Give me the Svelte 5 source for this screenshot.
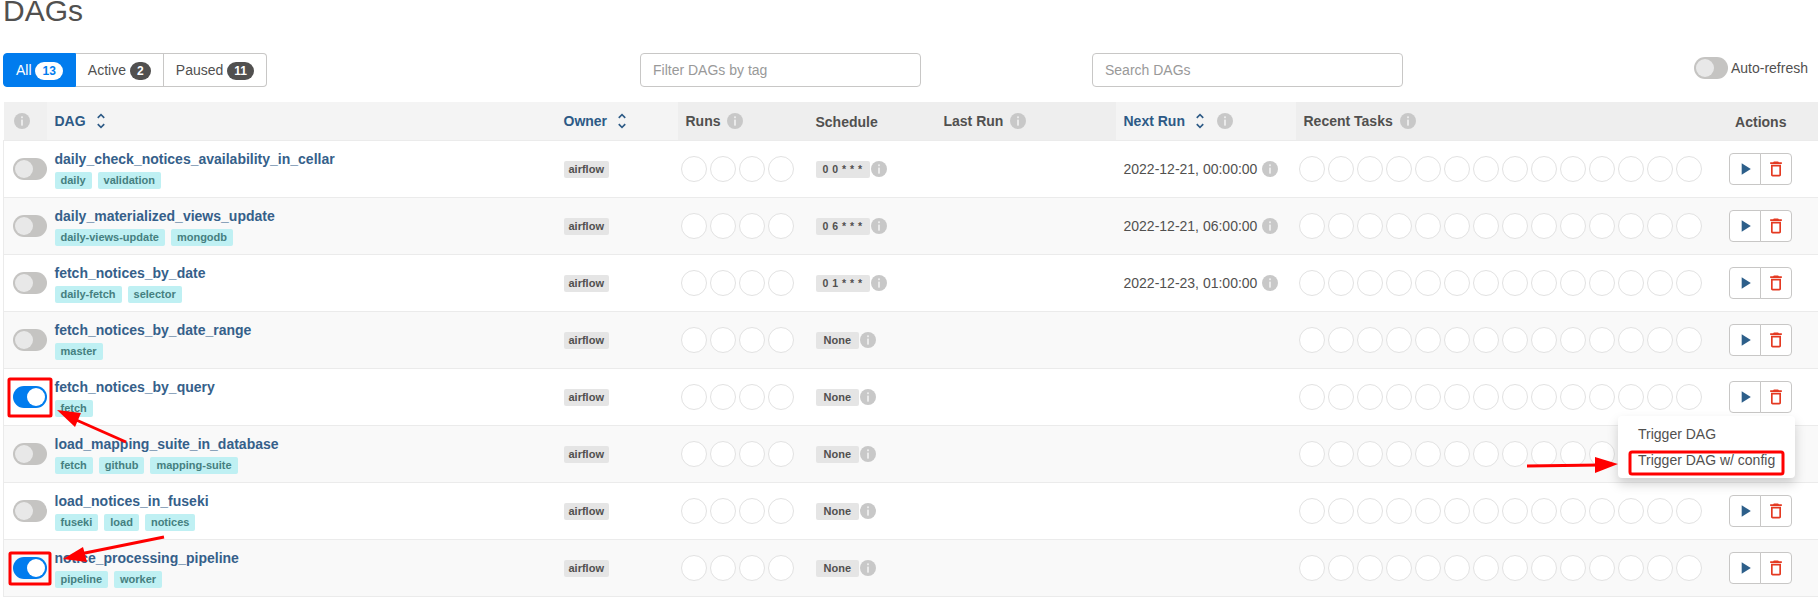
<script>
  const dags = [
    { name: 'daily_check_notices_availability_in_cellar', tags: ['daily', 'validation'], schedule: '0 0 * * *', next: '2022-12-21, 00:00:00' },
    { name: 'daily_materialized_views_update', tags: ['daily-views-update', 'mongodb'], schedule: '0 6 * * *', next: '2022-12-21, 06:00:00' },
    { name: 'fetch_notices_by_date', tags: ['daily-fetch', 'selector'], schedule: '0 1 * * *', next: '2022-12-23, 01:00:00' },
    { name: 'fetch_notices_by_date_range', tags: ['master'], schedule: 'None' },
    { name: 'fetch_notices_by_query', tags: ['fetch'], schedule: 'None', on: true },
    { name: 'load_mapping_suite_in_database', tags: ['fetch', 'github', 'mapping-suite'], schedule: 'None' },
    { name: 'load_notices_in_fuseki', tags: ['fuseki', 'load', 'notices'], schedule: 'None' },
    { name: 'notice_processing_pipeline', tags: ['pipeline', 'worker'], schedule: 'None', on: true }
  ];
  const runs = Array(4);
  const tasks = Array(14);
</script>

{#snippet info()}
  <svg class="info" viewBox="0 0 16 16" aria-hidden="true">
    <circle cx="8" cy="8" r="8" />
    <rect x="7.1" y="3.4" width="1.8" height="1.8" fill="#eee" />
    <rect x="7.1" y="6.6" width="1.8" height="6" fill="#eee" />
  </svg>
{/snippet}

{#snippet sort()}
  <svg class="sort" viewBox="0 0 24 24" aria-hidden="true">
    <path d="M12 5.83L15.17 9l1.41-1.41L12 3 7.41 7.59 8.83 9 12 5.83zm0 12.34L8.83 15l-1.41 1.41L12 21l4.59-4.59L15.17 15 12 18.17z" />
  </svg>
{/snippet}

{#snippet circles(list)}
  <div class="circles">
    {#each list as _}
      <span class="circle"></span>
    {/each}
  </div>
{/snippet}

<main>
  <h2>DAGs</h2>

  <div class="toolbar">
    <div class="filters">
      <button class="active">All <span class="count">13</span></button>
      <button>Active <span class="count">2</span></button>
      <button>Paused <span class="count">11</span></button>
    </div>
    <input class="field" placeholder="Filter DAGs by tag" />
    <input class="field" placeholder="Search DAGs" />
    <div class="refresh">
      <span class="switch"></span>
      <span>Auto-refresh</span>
    </div>
  </div>

  <table>
    <colgroup>
      <col style="width: 43px" />
      <col style="width: 509px" />
      <col style="width: 122px" />
      <col style="width: 130px" />
      <col style="width: 128px" />
      <col style="width: 180px" />
      <col style="width: 180px" />
      <col style="width: 426px" />
      <col />
    </colgroup>
    <thead>
      <tr>
        <th class="first">{@render info()}</th>
        <th class="light link">DAG {@render sort()}</th>
        <th class="light link">Owner {@render sort()}</th>
        <th>Runs {@render info()}</th>
        <th class="low">Schedule</th>
        <th>Last Run {@render info()}</th>
        <th class="light link">Next Run {@render sort()} {@render info()}</th>
        <th>Recent Tasks {@render info()}</th>
        <th class="center low">Actions</th>
      </tr>
    </thead>
    <tbody>
      {#each dags as dag}
        <tr>
          <td class="toggle"><span class="switch" class:on={dag.on}></span></td>
          <td>
            <div class="name">{dag.name}</div>
            <div class="tags">
              {#each dag.tags as tag}
                <span class="tag">{tag}</span>
              {/each}
            </div>
          </td>
          <td><span class="badge owner">airflow</span></td>
          <td class="tight">{@render circles(runs)}</td>
          <td><span class="badge" class:cron={dag.next}>{dag.schedule}</span>{@render info()}</td>
          <td></td>
          <td>
            {#if dag.next}
              <span class="next">{dag.next}</span>{@render info()}
            {/if}
          </td>
          <td class="tight">{@render circles(tasks)}</td>
          <td class="actions">
            <div class="group">
              <button aria-label="Trigger DAG">
                <svg viewBox="0 0 24 24" fill="#2d5f8a"><path d="M8 5v14l11-7z" /></svg>
              </button>
              <button aria-label="Delete DAG">
                <svg viewBox="0 0 24 24" fill="#e43921"><path d="M6 19c0 1.1.9 2 2 2h8c1.1 0 2-.9 2-2V7H6v12zM8 9h8v10H8V9zm7.5-5l-1-1h-5l-1 1H5v2h14V4z" /></svg>
              </button>
            </div>
          </td>
        </tr>
      {/each}
    </tbody>
  </table>

  <ul class="menu">
    <li>Trigger DAG</li>
    <li>Trigger DAG w/ config</li>
  </ul>

  <!-- red annotations drawn over the screenshot -->
  <svg class="marks" viewBox="0 0 1818 603" aria-hidden="true">
    <rect x="9" y="379" width="42" height="37" rx="1" />
    <rect x="10" y="553" width="40" height="31" rx="1" />
    <rect x="1630" y="452" width="153" height="22" rx="2" />
    <line x1="126" y1="442" x2="74" y2="419" />
    <polygon points="57,410 81,413 75,427" />
    <line x1="164" y1="537" x2="80" y2="554" />
    <polygon points="63,559 83,547 87,562" />
    <line x1="1527" y1="466" x2="1600" y2="465" />
    <polygon points="1618,464 1595,457 1595,473" />
  </svg>
</main>

<style>
  :global(body) {
    margin: 0;
    font-family: "Liberation Sans", Arial, sans-serif;
    font-size: 14px;
    color: #51504f;
    background: #fff;
  }

  main {
    position: relative;
    width: 1818px;
    height: 603px;
    overflow: hidden;
  }

  h2 {
    margin: -6px 0 0 3px;
    height: 59px;
    font-size: 30px;
    font-weight: 400;
    line-height: 33px;
  }

  .toolbar {
    display: grid;
    grid-template-columns: 637px 281px 171px 311px 1fr;
    padding-left: 3px;
    height: 34px;
  }

  .filters {
    display: flex;
    grid-column: 1;
    width: 264px;
    height: 34px;
  }

  .filters button {
    height: 34px;
    padding: 1px 12px 0;
    border: 1px solid #c8c7c6;
    border-left: 0;
    background: #fff;
    color: #51504f;
    font: inherit;
    white-space: nowrap;
  }

  .filters button:first-child {
    border: 1px solid #017cee;
    border-radius: 4px 0 0 4px;
  }

  .filters button:last-child {
    border-radius: 0 4px 4px 0;
  }

  .filters .active {
    background: #017cee;
    color: #fff;
  }

  .count {
    display: inline-block;
    min-width: 7px;
    padding: 3px 7px;
    border-radius: 10px;
    background: #51504f;
    color: #fff;
    font-size: 12px;
    font-weight: 700;
    line-height: 1;
  }

  .active .count {
    background: #fff;
    color: #017cee;
  }

  .field {
    grid-column: 2;
    box-sizing: border-box;
    width: 100%;
    height: 34px;
    padding: 6px 12px;
    border: 1px solid #c8c7c6;
    border-radius: 4px;
    font: inherit;
  }

  .field + .field {
    grid-column: 4;
  }

  .field::placeholder {
    color: #999;
    opacity: 1;
  }

  .refresh {
    grid-column: 5;
    display: flex;
    justify-content: flex-end;
    gap: 3px;
    align-items: center;
    height: 30px;
    padding-right: 10px;
  }

  .switch {
    display: block;
    box-sizing: border-box;
    position: relative;
    width: 34px;
    height: 22px;
    border-radius: 11px;
    background: #c5c4c2;
  }

  .switch::after {
    content: '';
    position: absolute;
    left: 2px;
    top: 2px;
    width: 18px;
    height: 18px;
    border-radius: 50%;
    background: #e8e8e8;
  }

  .switch.on {
    background: #017cee;
  }

  .switch.on::after {
    left: 14px;
    background: #fff;
  }

  table {
    table-layout: fixed;
    border-collapse: collapse;
    width: 1815px;
    margin: 15px 0 0 3px;
  }

  th {
    height: 38px;
    box-sizing: border-box;
    padding: 0 8px;
    background: #eee;
    color: #51504f;
    font-weight: 700;
    text-align: left;
    white-space: nowrap;
  }

  th.low {
    padding-top: 2px;
  }

  th.light {
    background: #f4f4f4;
  }

  th.first {
    background: #f0f0f0;
    padding-left: 7px;
  }

  th.link {
    color: #2d5a86;
  }

  th.center {
    text-align: center;
    padding: 2px 18px 0 0;
  }

  td {
    height: 57px;
    box-sizing: border-box;
    padding: 0 8px;
    border-top: 1px solid #ebebeb;
    vertical-align: middle;
    white-space: nowrap;
  }

  tbody tr:nth-child(even) td {
    background: #f9f9f9;
  }

  tbody tr:last-child td {
    border-bottom: 1px solid #ebebeb;
  }

  td:first-child {
    border-left: 1px solid #ebebeb;
  }

  td.toggle {
    padding: 0 0 0 9px;
  }

  td.tight {
    padding: 0 3px;
  }

  .name {
    color: #35608a;
    font-weight: 700;
    line-height: 20px;
  }

  .tags {
    display: flex;
    gap: 6px;
    margin-top: 3px;
  }

  .tag,
  .badge {
    display: inline-block;
    height: 17px;
    box-sizing: border-box;
    padding: 0 6px;
    border-radius: 2px;
    font-size: 11px;
    font-weight: 700;
    line-height: 17px;
  }

  .tag {
    background: #bff0f3;
    color: #457f80;
  }

  .badge {
    margin-top: 2px;
    padding: 0 8px;
    background: #e5e5e5;
    vertical-align: middle;
  }

  .owner {
    padding: 0 5px;
  }

  .cron {
    font-size: 10.5px;
    letter-spacing: 0.5px;
    padding: 0 7px;
  }

  .next {
    vertical-align: middle;
  }

  .next + .info {
    margin-left: 5px;
  }

  .circles {
    display: flex;
    gap: 3px;
  }

  .circle {
    box-sizing: border-box;
    width: 26px;
    height: 26px;
    border: 1px solid #e2e2e2;
    border-radius: 50%;
    background: #fff;
  }

  .info {
    width: 16px;
    height: 16px;
    margin-left: 1px;
    fill: #c8c8c8;
    vertical-align: middle;
  }

  th .info {
    margin-left: 3px;
    vertical-align: -3px;
  }

  .sort {
    width: 20px;
    height: 20px;
    margin-left: 1px;
    fill: currentColor;
    vertical-align: -5px;
  }

  .actions {
    padding: 0 0 0 7px;
  }

  .group {
    display: flex;
    width: 63px;
    height: 32px;
  }

  .group button {
    flex: 1;
    display: flex;
    align-items: center;
    justify-content: center;
    padding: 0;
    border: 1px solid #c8c7c6;
    border-radius: 0 4px 4px 0;
    background: #fff;
    margin-left: -1px;
  }

  .group button:first-child {
    border-radius: 4px 0 0 4px;
    margin-left: 0;
  }

  .group svg {
    width: 20px;
    height: 20px;
  }

  .menu {
    position: absolute;
    left: 1618px;
    top: 416px;
    box-sizing: border-box;
    width: 177px;
    height: 62px;
    margin: 0;
    padding: 5px 0;
    list-style: none;
    background: #fff;
    border-radius: 4px;
    box-shadow: 0 6px 12px rgba(0, 0, 0, 0.175);
  }

  .menu li {
    padding: 0 20px;
    line-height: 26px;
    white-space: nowrap;
  }

  .marks {
    position: absolute;
    left: 0;
    top: 0;
    width: 1818px;
    height: 603px;
    pointer-events: none;
  }

  .marks rect {
    fill: none;
    stroke: #f00;
    stroke-width: 3;
  }

  .marks line {
    stroke: #f00;
    stroke-width: 3;
  }

  .marks polygon {
    fill: #f00;
  }
</style>
